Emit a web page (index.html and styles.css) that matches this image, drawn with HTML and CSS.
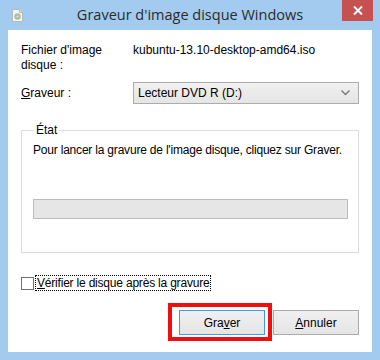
FILE: index.html
```html
<!DOCTYPE html>
<html lang="fr">
<head>
    <meta charset="UTF-8">
    <title>Graveur d'image disque Windows</title>
    <link rel="stylesheet" href="styles.css">
</head>
<body>
    <div class="window">
        <!-- Title bar -->
        <div class="titlebar">
            <svg class="app-icon" width="11" height="13" viewBox="0 0 11 13">
                <path d="M0.5 0.5 H7.5 L10.5 3.5 V12.5 H0.5 Z" fill="#f4f4f4" stroke="#b9b9b9"/>
                <path d="M7.5 0.5 V3.5 H10.5" fill="#e2e2e2" stroke="#b9b9b9"/>
                <circle cx="5.5" cy="7.5" r="3.2" fill="#9cc89a"/>
                <circle cx="5.5" cy="7.5" r="2" fill="#b8b8b8"/>
                <circle cx="5.5" cy="7.5" r="0.8" fill="#f4f4f4"/>
            </svg>
            <div class="title">Graveur d'image disque Windows</div>
            <div class="close-btn">
                <svg width="10" height="9" viewBox="0 0 10 9">
                    <path d="M1 0.5 L9 8.5 M9 0.5 L1 8.5" stroke="#fff" stroke-width="2"/>
                </svg>
            </div>
        </div>

        <!-- Client area -->
        <div class="client">
            <div class="field-row">
                <div class="field-label">Fichier d'image disque :</div>
                <div class="field-value">kubuntu-13.10-desktop-amd64.iso</div>
            </div>

            <div class="field-row burner-row">
                <label class="field-label" for="burner"><u>G</u>raveur :</label>
                <div class="combo" id="burner">
                    <span>Lecteur DVD R (D:)</span>
                    <svg width="9" height="6" viewBox="0 0 9 6">
                        <path d="M0.5 0.5 L4.5 4.5 L8.5 0.5" fill="none" stroke="#7a7a7a" stroke-width="1.4"/>
                    </svg>
                </div>
            </div>

            <fieldset class="status-box">
                <legend>État</legend>
                <div class="status-text">Pour lancer la gravure de l'image disque, cliquez sur Graver.</div>
                <div class="progress"></div>
            </fieldset>

            <div class="check-row">
                <span class="checkbox"></span>
                <span class="check-label"><u>V</u>érifier le disque après la gravure</span>
            </div>

            <div class="button-row">
                <div class="btn btn-default">Gra<u>v</u>er</div>
                <div class="btn"><u>A</u>nnuler</div>
            </div>
        </div>
    </div>
</body>
</html>
```

FILE: styles.css
```css
/* Page reset */
body {
    margin: 0;
    padding: 0;
    font-family: "Liberation Sans", Arial, sans-serif;
    font-size: 12px;
    color: #000;
    background: #a3cbef;
}

/* Window frame */
.window {
    width: 380px;
    height: 360px;
    display: flex;
    flex-direction: column;
    background: #a3cbef;
}

/* Title bar */
.titlebar {
    height: 30px;
    display: grid;
    grid-template-columns: 1fr auto 1fr;
    align-items: start;
}

.app-icon {
    margin: 9px 0 0 12px;
}

.title {
    font-family: "Open Sans", sans-serif;
    font-size: 14.5px;
    color: #2b2b2b;
    line-height: 30px;
}

.close-btn {
    justify-self: end;
    width: 31px;
    height: 21px;
    margin-right: 7px;
    background: #c75050;
    display: flex;
    align-items: center;
    justify-content: center;
}

/* White client area */
.client {
    flex: 1;
    margin: 0 8px 8px 8px;
    padding: 13px 13px 0 13px;
    background: #fff;
    display: flex;
    flex-direction: column;
}

.field-row {
    display: grid;
    grid-template-columns: 112px 1fr;
    line-height: 15px;
}

.field-label {
    padding-right: 10px;
}

.burner-row {
    margin-top: 9px;
    align-items: center;
}

/* Combo box */
.combo {
    height: 22px;
    box-sizing: border-box;
    border: 1px solid #acacac;
    background: linear-gradient(#f0f0f0, #e5e5e5);
    display: flex;
    align-items: center;
    justify-content: space-between;
    padding: 0 8px 0 4px;
}

/* Group box */
.status-box {
    margin: 19px 0 0 0;
    padding: 5px 10px 33px 11px;
    border: 1px solid #dcdcdc;
    min-width: 0;
}

.status-box legend {
    padding: 0 2px 0 2px;
    margin-left: 1px;
    line-height: 15px;
}

.status-text {
    line-height: 15px;
    white-space: nowrap;
    letter-spacing: -0.2px;
}

.progress {
    margin-top: 41px;
    height: 20px;
    box-sizing: border-box;
    border: 1px solid #bcbcbc;
    background: #e6e6e6;
}

/* Checkbox row */
.check-row {
    margin-top: 22px;
    display: flex;
    align-items: center;
    height: 16px;
}

.checkbox {
    width: 13px;
    height: 13px;
    box-sizing: border-box;
    border: 1px solid #707070;
    background: #fff;
}

.check-label {
    margin-left: 2px;
    padding: 0 1px;
    line-height: 14px;
    letter-spacing: -0.2px;
    outline: 1px dotted #000;
}

/* Buttons */
.button-row {
    margin-top: 19px;
    display: flex;
    justify-content: flex-end;
    gap: 8px;
}

.btn {
    position: relative;
    width: 86px;
    height: 25px;
    box-sizing: border-box;
    border: 1px solid #acacac;
    background: linear-gradient(#f0f0f0, #e5e5e5);
    display: flex;
    align-items: center;
    justify-content: center;
}

.btn-default {
    border-color: #3c9cf2;
}

/* Red highlight drawn over the default button */
.btn-default::after {
    content: "";
    position: absolute;
    top: -8px;
    left: -12px;
    right: -8px;
    bottom: -7px;
    border: 4px solid #f00f0f;
}
```
